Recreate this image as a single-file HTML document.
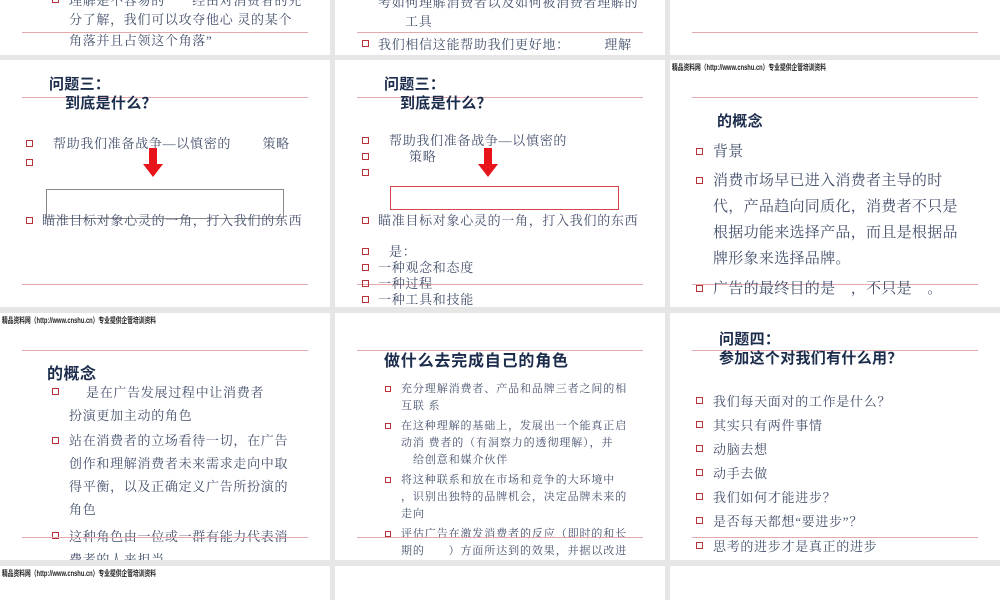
<!DOCTYPE html>
<html><head><meta charset="utf-8"><style>
*{margin:0;padding:0;box-sizing:border-box}
body{width:1000px;height:600px;background:#e6e6e6;position:relative;overflow:hidden;font-family:"Liberation Serif","Noto Serif CJK SC",serif;color:#44506c}
.s{position:absolute;background:#fff;overflow:hidden}
.in{position:absolute;width:1000px;height:600px}
.t{position:absolute;white-space:nowrap;line-height:1}
.b{font-family:"Liberation Sans","Noto Sans CJK SC",sans-serif;font-weight:bold;color:#1c2c4c;letter-spacing:.5px}
.h{font-family:"Liberation Sans","Noto Sans CJK SC",sans-serif;font-size:8px;font-weight:bold;color:#222;transform:scaleX(.72);transform-origin:left}
.ln{position:absolute;height:1px;background:#e3a9ab}
.q{position:absolute;width:7px;height:7px;border:1.5px solid #b8323a}
.f13{font-size:13px;letter-spacing:.7px}.f15{font-size:15px;letter-spacing:.3px}.f11{font-size:11px;letter-spacing:.9px}
</style></head><body>

<!-- row1 col1 -->
<div class="s" style="left:0;top:0;width:330px;height:55px"><div class="in" style="left:0;top:0">
<div class="q" style="left:52px;top:-4px"></div>
<div class="t f13" style="left:69px;top:-6px">理解是不容易的　　经由对消费者的充</div>
<div class="t f13" style="left:69px;top:13px">分了解，我们可以攻夺他心 灵的某个</div>
<div class="t f13" style="left:69px;top:34px">角落并且占领这个角落”</div>
<div class="ln" style="left:22px;top:32px;width:286px"></div>
</div></div>
<!-- row1 col2 -->
<div class="s" style="left:335px;top:0;width:330px;height:55px"><div class="in" style="left:-335px;top:0">
<div class="t f13" style="left:378px;top:-4px">考如何理解消费者以及如何被消费者理解的</div>
<div class="t f13" style="left:405px;top:15px">工具</div>
<div class="ln" style="left:357px;top:32px;width:286px"></div>
<div class="q" style="left:362px;top:40px"></div>
<div class="t f13" style="left:378px;top:38px">我们相信这能帮助我们更好地：　　　理解</div>
</div></div>
<!-- row1 col3 -->
<div class="s" style="left:670px;top:0;width:330px;height:55px"><div class="in" style="left:-670px;top:0">
<div class="ln" style="left:692px;top:32px;width:286px"></div>
</div></div>

<!-- row2 col1 -->
<div class="s" style="left:0;top:60px;width:330px;height:247px"><div class="in" style="left:0;top:-60px">
<div class="t b f15" style="left:49px;top:77px">问题三：</div>
<div class="ln" style="left:22px;top:97px;width:286px"></div>
<div class="t b f15" style="left:65px;top:96px">到底是什么？</div>
<div class="q" style="left:26px;top:140px"></div>
<div class="t f13" style="left:53px;top:137px">帮助我们准备战争—以慎密的　　 策略</div>
<div class="q" style="left:26px;top:159px"></div>
<svg style="position:absolute;left:143px;top:148px" width="20" height="30"><path d="M6 0H14V16H20L10 29L0 16H6Z" fill="#e8141c"/></svg>
<div style="position:absolute;left:46px;top:189px;width:238px;height:30px;border:1px solid #888"></div>
<div class="q" style="left:26px;top:217px"></div>
<div class="t f13" style="left:42px;top:214px">瞄准目标对象心灵的一角，打入我们的东西</div>
<div class="ln" style="left:22px;top:284px;width:286px"></div>
</div></div>
<!-- row2 col2 -->
<div class="s" style="left:335px;top:60px;width:330px;height:247px"><div class="in" style="left:-335px;top:-60px">
<div class="t b f15" style="left:384px;top:77px">问题三：</div>
<div class="ln" style="left:357px;top:97px;width:286px"></div>
<div class="t b f15" style="left:400px;top:96px">到底是什么？</div>
<div class="q" style="left:362px;top:137px"></div>
<div class="t f13" style="left:389px;top:134px">帮助我们准备战争—以慎密的</div>
<div class="q" style="left:362px;top:153px"></div>
<div class="t f13" style="left:409px;top:150px">策略</div>
<div class="q" style="left:362px;top:169px"></div>
<svg style="position:absolute;left:478px;top:148px" width="20" height="30"><path d="M6 0H14V16H20L10 29L0 16H6Z" fill="#e8141c"/></svg>
<div style="position:absolute;left:390px;top:186px;width:229px;height:24px;border:1.5px solid #d9444c"></div>
<div class="q" style="left:362px;top:217px"></div>
<div class="t f13" style="left:378px;top:214px">瞄准目标对象心灵的一角，打入我们的东西</div>
<div class="q" style="left:362px;top:248px"></div>
<div class="t f13" style="left:389px;top:245px">是：</div>
<div class="q" style="left:362px;top:264px"></div>
<div class="t f13" style="left:378px;top:261px">一种观念和态度</div>
<div class="ln" style="left:357px;top:284px;width:286px"></div>
<div class="q" style="left:362px;top:280px"></div>
<div class="t f13" style="left:378px;top:277px">一种过程</div>
<div class="q" style="left:362px;top:296px"></div>
<div class="t f13" style="left:378px;top:293px">一种工具和技能</div>
</div></div>
<!-- row2 col3 -->
<div class="s" style="left:670px;top:60px;width:330px;height:247px"><div class="in" style="left:-670px;top:-60px">
<div class="t h" style="left:672px;top:64px">精品资料网（http://www.cnshu.cn）专业提供企管培训资料</div>
<div class="ln" style="left:692px;top:97px;width:286px"></div>
<div class="t b f15" style="left:717px;top:114px">的概念</div>
<div class="q" style="left:696px;top:148px"></div>
<div class="t f15" style="left:713px;top:145px">背景</div>
<div class="q" style="left:696px;top:177px"></div>
<div class="t f15" style="left:713px;top:174px">消费市场早已进入消费者主导的时</div>
<div class="t f15" style="left:713px;top:200px">代，产品趋向同质化，消费者不只是</div>
<div class="t f15" style="left:713px;top:226px">根据功能来选择产品，而且是根据品</div>
<div class="t f15" style="left:713px;top:252px">牌形象来选择品牌。</div>
<div class="ln" style="left:692px;top:284px;width:286px"></div>
<div class="q" style="left:696px;top:285px"></div>
<div class="t f15" style="left:713px;top:282px">广告的最终目的是　，不只是　。</div>
</div></div>

<!-- row3 col1 -->
<div class="s" style="left:0;top:313px;width:330px;height:247px"><div class="in" style="left:0;top:-313px">
<div class="t h" style="left:2px;top:317px">精品资料网（http://www.cnshu.cn）专业提供企管培训资料</div>
<div class="ln" style="left:22px;top:350px;width:286px"></div>
<div class="t b" style="left:47px;top:367px;font-size:16px">的概念</div>
<div class="q" style="left:52px;top:388px"></div>
<div class="t f13" style="left:86px;top:386px">是在广告发展过程中让消费者</div>
<div class="t f13" style="left:69px;top:409px">扮演更加主动的角色</div>
<div class="q" style="left:52px;top:437px"></div>
<div class="t f13" style="left:69px;top:434px">站在消费者的立场看待一切，在广告</div>
<div class="t f13" style="left:69px;top:457px">创作和理解消费者未来需求走向中取</div>
<div class="t f13" style="left:69px;top:480px">得平衡，以及正确定义广告所扮演的</div>
<div class="t f13" style="left:69px;top:503px">角色</div>
<div class="q" style="left:52px;top:532px"></div>
<div class="t f13" style="left:69px;top:530px">这种角色由一位或一群有能力代表消</div>
<div class="ln" style="left:22px;top:537px;width:286px"></div>
<div class="t f13" style="left:69px;top:553px">费者的人来担当—</div>
</div></div>
<!-- row3 col2 -->
<div class="s" style="left:335px;top:313px;width:330px;height:247px"><div class="in" style="left:-335px;top:-313px">
<div class="ln" style="left:357px;top:350px;width:286px"></div>
<div class="t b" style="left:384px;top:354px;font-size:16px;letter-spacing:.8px">做什么去完成自己的角色</div>
<div class="q" style="left:385px;top:386px;width:6px;height:6px"></div>
<div class="t f11" style="left:401px;top:384px">充分理解消费者、产品和品牌三者之间的相</div>
<div class="t f11" style="left:401px;top:401px">互联 系</div>
<div class="q" style="left:385px;top:423px;width:6px;height:6px"></div>
<div class="t f11" style="left:401px;top:421px">在这种理解的基础上，发展出一个能真正启</div>
<div class="t f11" style="left:401px;top:438px">动消 费者的（有洞察力的透彻理解），并</div>
<div class="t f11" style="left:413px;top:455px">给创意和媒介伙伴</div>
<div class="q" style="left:385px;top:477px;width:6px;height:6px"></div>
<div class="t f11" style="left:401px;top:475px">将这种联系和放在市场和竞争的大环境中</div>
<div class="t f11" style="left:401px;top:492px">，识别出独特的品牌机会，决定品牌未来的</div>
<div class="t f11" style="left:401px;top:509px">走向</div>
<div class="q" style="left:385px;top:531px;width:6px;height:6px"></div>
<div class="t f11" style="left:401px;top:529px">评估广告在激发消费者的反应（即时的和长</div>
<div class="ln" style="left:357px;top:537px;width:286px"></div>
<div class="t f11" style="left:401px;top:546px">期的　　）方面所达到的效果，并据以改进</div>
</div></div>
<!-- row3 col3 -->
<div class="s" style="left:670px;top:313px;width:330px;height:247px"><div class="in" style="left:-670px;top:-313px">
<div class="t b f15" style="left:719px;top:332px">问题四：</div>
<div class="ln" style="left:692px;top:350px;width:286px"></div>
<div class="t b f15" style="left:719px;top:351px">参加这个对我们有什么用？</div>
<div class="q" style="left:696px;top:397px"></div><div class="t f13" style="left:713px;top:395px">我们每天面对的工作是什么？</div>
<div class="q" style="left:696px;top:421px"></div><div class="t f13" style="left:713px;top:419px">其实只有两件事情</div>
<div class="q" style="left:696px;top:445px"></div><div class="t f13" style="left:713px;top:443px">动脑去想</div>
<div class="q" style="left:696px;top:469px"></div><div class="t f13" style="left:713px;top:467px">动手去做</div>
<div class="q" style="left:696px;top:493px"></div><div class="t f13" style="left:713px;top:491px">我们如何才能进步？</div>
<div class="q" style="left:696px;top:517px"></div><div class="t f13" style="left:713px;top:515px">是否每天都想“要进步”？</div>
<div class="ln" style="left:692px;top:537px;width:286px"></div>
<div class="q" style="left:696px;top:542px"></div><div class="t f13" style="left:713px;top:540px">思考的进步才是真正的进步</div>
</div></div>

<!-- row4 -->
<div class="s" style="left:0;top:566px;width:330px;height:34px"><div class="in" style="left:0;top:-566px">
<div class="t h" style="left:2px;top:570px">精品资料网（http://www.cnshu.cn）专业提供企管培训资料</div>
</div></div>
<div class="s" style="left:335px;top:566px;width:330px;height:34px"></div>
<div class="s" style="left:670px;top:566px;width:330px;height:34px"></div>
</body></html>
